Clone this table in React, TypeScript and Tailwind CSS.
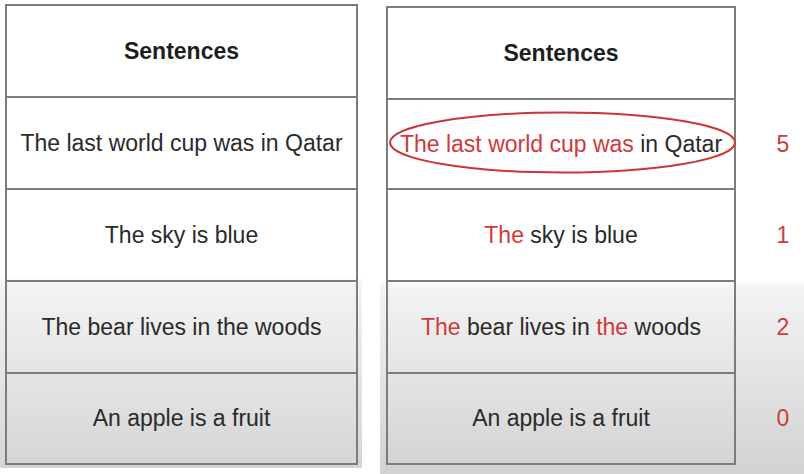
import React from "react";

const font = { fontFamily: '"Liberation Sans", Arial, sans-serif' };

const R = ({ children }: { children: React.ReactNode }) => (
  <span className="text-[#d03a3a]">{children}</span>
);

export default function App() {
  const leftRows = [
    "The last world cup was in Qatar",
    "The sky is blue",
    "The bear lives in the woods",
    "An apple is a fruit",
  ];
  const rightRows: { node: React.ReactNode; n: string; h: string }[] = [
    {
      node: (
        <>
          <R>The last world cup was</R> in Qatar
        </>
      ),
      n: "5",
      h: "h-[90px]",
    },
    {
      node: (
        <>
          <R>The</R> sky is blue
        </>
      ),
      n: "1",
      h: "h-[92px]",
    },
    {
      node: (
        <>
          <R>The</R> bear lives in <R>the</R> woods
        </>
      ),
      n: "2",
      h: "h-[92px]",
    },
    { node: <>An apple is a fruit</>, n: "0", h: "h-[91px]" },
  ];
  const leftHeights = ["h-[92px]", "h-[92px]", "h-[92px]", "h-[91px]"];

  return (
    <div
      className="flex w-[804px] h-[474px] bg-white text-[#2a2a2a] text-[23px]"
      style={font}
    >
      {/* Left image */}
      <div className="w-[362px] h-[468px] pl-[5px] pt-[4px] bg-[linear-gradient(to_bottom,#ffffff_0%,#ffffff_59%,#f3f3f3_61%,#d5d5d5_100%)]">
        <div className="w-[353px] border-2 border-[#7c7c7c] flex flex-col">
          <div className="h-[90px] flex items-center justify-center font-bold text-[#1e1e1e]">
            Sentences
          </div>
          {leftRows.map((t, i) => (
            <div
              key={t}
              className={`${leftHeights[i]} border-t-2 border-[#7c7c7c] flex items-center justify-center`}
            >
              {t}
            </div>
          ))}
        </div>
      </div>

      {/* gap */}
      <div className="w-[18px]" />

      {/* Right image */}
      <div className="relative flex-1 h-[474px] pl-[6px] pt-[6px] flex bg-[linear-gradient(to_bottom,#ffffff_0%,#ffffff_59%,#f3f3f3_61%,#d2d2d2_100%)]">
        <div className="w-[350px] h-[459px] border-2 border-[#7c7c7c] flex flex-col">
          <div className="h-[90px] flex items-center justify-center font-bold text-[#1e1e1e]">
            Sentences
          </div>
          {rightRows.map((r, i) => (
            <div
              key={i}
              className={`${r.h} border-t-2 border-[#7c7c7c] flex items-center justify-center`}
            >
              <span>{r.node}</span>
            </div>
          ))}
        </div>
        <div className="ml-[27px] w-[40px] pt-[2px] flex flex-col text-[#cc3d3d]">
          <div className="h-[90px]" />
          {rightRows.map((r, i) => (
            <div
              key={i}
              className={`${r.h} pt-[2px] flex items-center justify-center`}
            >
              {r.n}
            </div>
          ))}
        </div>
        <svg
          className="absolute left-0 top-0 pointer-events-none"
          width="424"
          height="474"
          viewBox="0 0 424 474"
        >
          <ellipse
            cx="182.5"
            cy="142.5"
            rx="172.5"
            ry="30"
            fill="none"
            stroke="#cc3535"
            strokeWidth="2"
          />
        </svg>
      </div>
    </div>
  );
}
